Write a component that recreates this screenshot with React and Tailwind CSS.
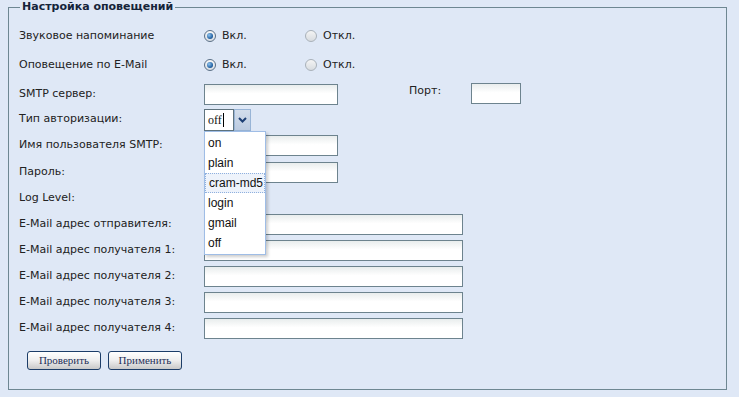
import React from "react";

const font = { fontFamily: '"DejaVu Sans", Verdana, sans-serif' };

const Radio = ({ checked, label }) => (
  <label className="flex items-center gap-[6px]">
    <span
      className={`w-[12px] h-[12px] rounded-full border flex items-center justify-center ${
        checked
          ? "border-[#5a6f86] bg-linear-to-b from-[#f8f8f8] to-[#d7dde4]"
          : "border-[#a9b1b9] bg-linear-to-b from-[#f4f4f4] to-[#d8dce0]"
      }`}
    >
      {checked && <span className="w-[6px] h-[6px] rounded-full bg-[radial-gradient(circle_at_35%_35%,#8fc4f0,#1b5a9c_70%,#0d335f)]"></span>}
    </span>
    <span>{label}</span>
  </label>
);

const TextInput = ({ w = "w-[134px]" }) => (
  <div className={`${w} h-[21px] border border-[#6d838e] bg-linear-to-b from-[#e9eded] to-white to-[45%]`}></div>
);

const Row = ({ label, h = "h-[26px]", mt = "", children }) => (
  <div className={`flex items-center ${h} ${mt}`}>
    <div className="w-[185px] shrink-0">{label}</div>
    {children}
  </div>
);

const options = ["on", "plain", "cram-md5", "login", "gmail", "off"];

export default function App() {
  return (
    <div className="w-[739px] h-[397px] bg-[#dfe8f6] text-[#222] text-[11px] overflow-hidden" style={font}>
      <div className="pl-[8px]">
        <fieldset className="w-[719px] h-[390px] border border-[#6e8792] pl-[10px] pr-[10px] pt-[9px]">
          <legend className="ml-[1px] px-[2px] font-bold text-[11px] text-[#15243a] leading-[14px]">
            Настройка оповещений
          </legend>

          <Row label="Звуковое напоминание">
            <div className="w-[101px]">
              <Radio checked label="Вкл." />
            </div>
            <Radio label="Откл." />
          </Row>

          <Row label="Оповещение по E-Mail" mt="mt-[3px]">
            <div className="w-[101px]">
              <Radio checked label="Вкл." />
            </div>
            <Radio label="Откл." />
          </Row>

          <Row label="SMTP сервер:" mt="mt-[3px]">
            <TextInput />
            <div className="ml-[71px] w-[62px] -mt-[5px]">Порт:</div>
            <div className="-mt-[1px]">
              <TextInput w="w-[50px]" />
            </div>
          </Row>

          <Row label="Тип авторизации:" h="h-[25px]">
            <div className="relative">
              <div className="flex h-[22px]">
                <div className="w-[30px] h-[22px] border border-[#5f737e] bg-white flex items-center pl-[3px] text-[12px] text-[#111]" style={{ fontFamily: '"Liberation Serif", serif' }}>
                  off<span className="w-[1px] h-[14px] bg-black ml-[1px]"></span>
                </div>
                <div className="w-[17px] h-[22px] border border-[#98b4d6] bg-linear-to-b from-[#d3deec] to-[#bccbe0] flex items-center justify-center">
                  <svg width="9" height="6" viewBox="0 0 9 6">
                    <path d="M1 1 L4.5 4.5 L8 1" fill="none" stroke="#1d3f74" strokeWidth="2" />
                  </svg>
                </div>
              </div>
              <div className="absolute left-0 top-[22px] w-[62px] bg-white border border-[#9fbde6] shadow-[2px_2px_3px_rgba(0,0,0,0.2)] z-10 py-[1px] text-[12px] text-[#111]" style={{ fontFamily: '"Liberation Sans", Arial, sans-serif' }}>
                {options.map((o) => (
                  <div
                    key={o}
                    className={`h-[20px] pl-[3px] flex items-center ${
                      o === "cram-md5" ? "border border-dotted border-[#8fb0de] bg-[#eef3fb] pl-[2px]" : ""
                    }`}
                  >
                    {o}
                  </div>
                ))}
              </div>
            </div>
          </Row>

          <Row label="Имя пользователя SMTP:" h="h-[27px]">
            <TextInput />
          </Row>

          <Row label="Пароль:">
            <TextInput />
          </Row>

          <Row label="Log Level:">
            <div></div>
          </Row>

          <Row label="E-Mail адрес отправителя:">
            <TextInput w="w-[259px]" />
          </Row>
          <Row label="E-Mail адрес получателя 1:">
            <TextInput w="w-[259px]" />
          </Row>
          <Row label="E-Mail адрес получателя 2:">
            <TextInput w="w-[259px]" />
          </Row>
          <Row label="E-Mail адрес получателя 3:">
            <TextInput w="w-[259px]" />
          </Row>
          <Row label="E-Mail адрес получателя 4:">
            <TextInput w="w-[259px]" />
          </Row>

          <div className="flex gap-[7px] mt-[10px] ml-[8px]">
            {["Проверить", "Применить"].map((b) => (
              <button
                key={b}
                className="w-[74px] h-[19px] rounded-[3px] border border-[#1c3d68] bg-linear-to-b from-white via-[#eeeeee] to-[#c9c9c9] text-[11px] text-[#1f2f57] leading-none"
                style={{ fontFamily: '"Liberation Serif", "Times New Roman", serif' }}
              >
                {b}
              </button>
            ))}
          </div>
        </fieldset>
      </div>
    </div>
  );
}
